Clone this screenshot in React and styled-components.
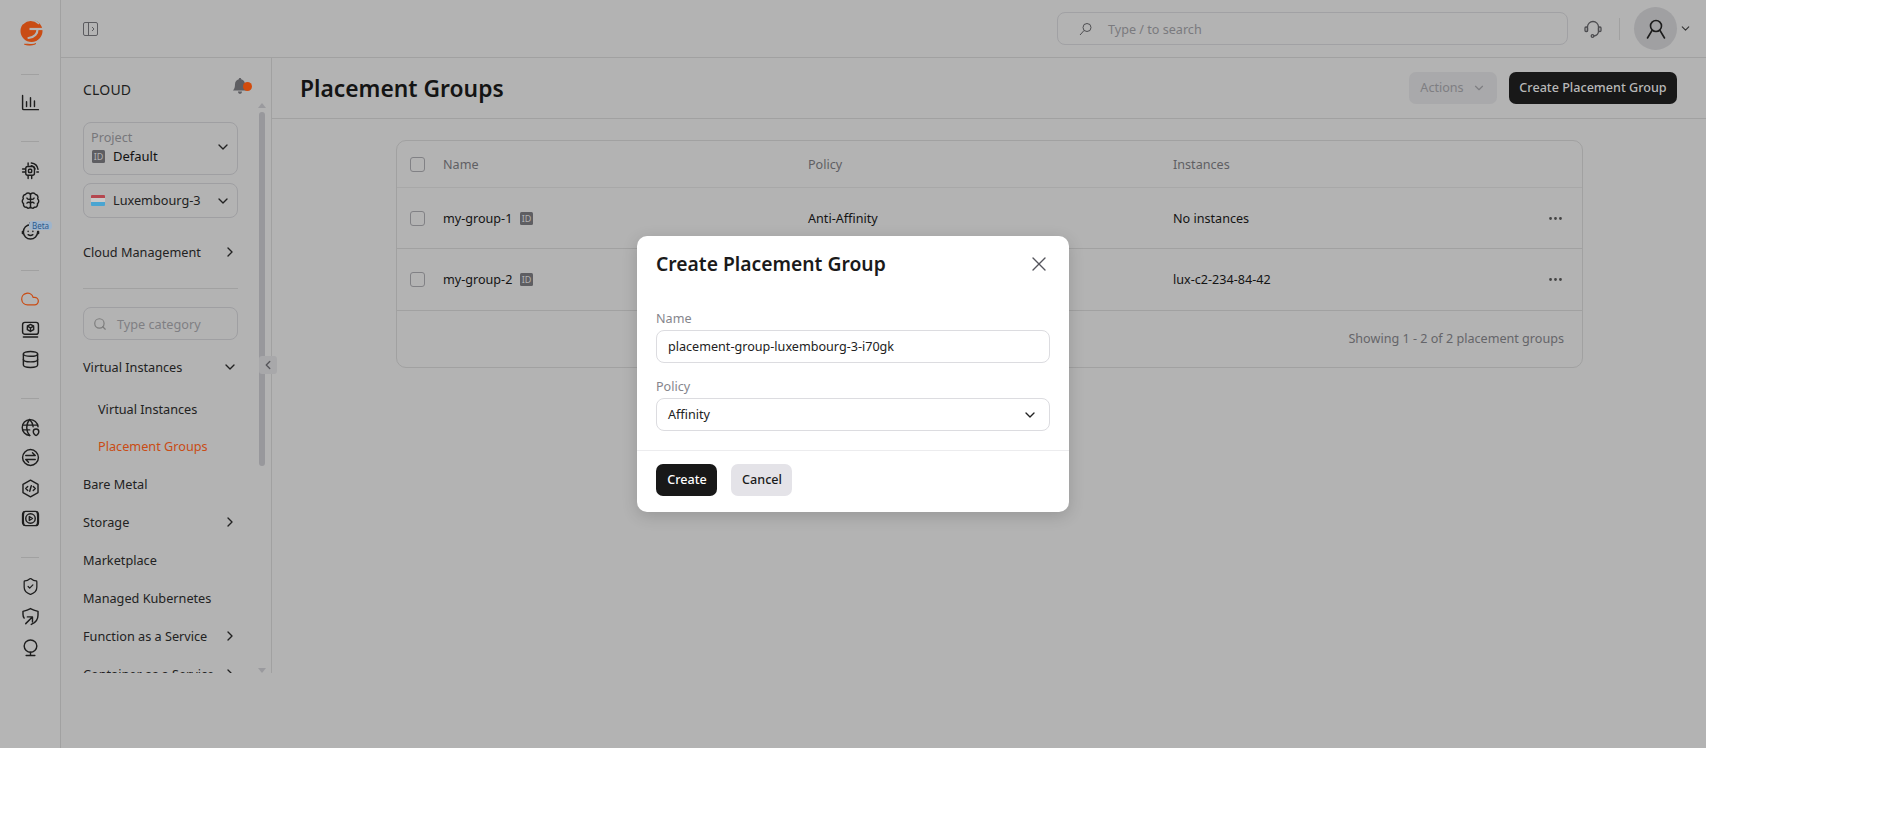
import React from "react"
import styled, { createGlobalStyle } from "styled-components"
import { ChevronDown, ChevronRight, ChevronLeft, Search, X, Ellipsis, Cloud, Database, ShieldCheck } from "lucide-react"

const GlobalStyle = createGlobalStyle`
  html, body {
    margin: 0;
    background: #fff;
  }
  body {
    font-family: "Noto Sans", "Open Sans", sans-serif;
    color: #1a1a1a;
  }
  * {
    box-sizing: border-box;
  }
`

const Logo = () => (
  <svg width="24" height="28" viewBox="0 0 24 28" fill="none">
    <circle cx="11.500" cy="13" r="11" fill="#c94c14" />
    <path d="M16 25.500c-3.500 2-8 2-11.500.8 4 .2 8-.2 11.500-.8Z" fill="#c94c14" stroke="#c94c14" />
    <path d="M3 5.500C7 1.500 14 1 18.500 5.500" stroke="#b5b5b5" strokeWidth="1.600" strokeLinecap="round" />
    <path d="M9.500 11H24" stroke="#b5b5b5" strokeWidth="2.200" />
    <path d="M17.500 11c.2 4.500-3 8.500-9 9" stroke="#b5b5b5" strokeWidth="2.200" strokeLinecap="round" />
    <path d="M20 21.500c-3 3-7 4.200-11 3.700" stroke="#b5b5b5" strokeWidth="1.200" strokeLinecap="round" />
  </svg>
)

const Stroke = ({ size = 19, children }) => (
  <svg width={size} height={size} viewBox="0 0 24 24" fill="none" stroke="currentColor" strokeWidth="1.800" strokeLinecap="round" strokeLinejoin="round">
    {children}
  </svg>
)

const ChartIcon = () => (
  <Stroke>
    <path d="M2 3v16.500c0 1 .5 1.500 1.500 1.500H22" />
    <path d="M7 11v6M12 6v11M17 10v7" />
  </Stroke>
)

const ChipIcon = () => (
  <Stroke>
    <rect x="6" y="7" width="11" height="11" rx="2.500" />
    <rect x="9.500" y="10.500" width="4" height="4" rx="1" />
    <path d="M2 10h3M2 14h3M9 19v3M13.500 19v3M9 2.500v3" />
    <path d="M13 2.500c4.500.4 7.800 3.700 8.500 8M13 6c2.200.3 4 2 4.700 4.200M20 14h2" />
  </Stroke>
)

const BrainIcon = () => (
  <Stroke>
    <path d="M12 4.500C11 2 7 1.700 5.700 4.500 3 4.800 1.800 7.500 3 9.800c-2 1.700-1.800 4.800.2 6.200-.7 2.700 1.500 5 4 4.500 1.300 1.800 3.700 1.500 4.800-.5 1.100 2 3.500 2.300 4.800.5 2.500.5 4.700-1.800 4-4.500 2-1.400 2.200-4.500.2-6.200 1.200-2.300 0-5-2.700-5.300C17 1.700 13 2 12 4.500Z" />
    <path d="M12 4.500v15.500" />
    <path d="M12 10c-1.500.8-3.500.5-4.500-1M12 15c-1.300-1-3.500-1-4.500.3M12 10c1.500.8 3.500.5 4.500-1M12 15c1.300-1 3.500-1 4.500.3" />
  </Stroke>
)

const BabyIcon = () => (
  <Stroke>
    <path d="M12 3.500a9 9 0 1 0 9 9" />
    <path d="M12 3.500c-1.500-1-1-3 1-2.500" />
    <path d="M9 11.500v.5M15 11.500v.5M9 16c1.800 1.400 4.200 1.400 6 0" />
    <path d="M3 12H1.800v2.500H3M21 12h1.200v2.500H21" />
  </Stroke>
)

const ScreenBoxIcon = () => (
  <Stroke>
    <rect x="2" y="3" width="20" height="15" rx="3" />
    <path d="M12 5.500l4 2.200v4.600l-4 2.200-4-2.200V7.700zM8 7.700l4 2.300 4-2.300M12 10v4.500M3 21.500h18" />
  </Stroke>
)

const GlobePinIcon = () => (
  <Stroke>
    <path d="M21.500 11A10 10 0 1 0 11 22" />
    <path d="M2 9h19M2 15h9M11 2c-5 5.500-5 14.500 0 20M11 2c2.800 3 4.200 6.500 4.300 9" />
    <path d="M22.500 17.500c0 2-2.500 4.500-3.500 4.500s-3.500-2.500-3.500-4.500a3.500 3.500 0 0 1 7 0Z" />
  </Stroke>
)

const SwapIcon = () => (
  <Stroke>
    <circle cx="12" cy="12" r="10" />
    <path d="M6 9.500h12M14.500 6l3.500 3.500M18 14.500H6M9.500 18L6 14.500" />
  </Stroke>
)

const CodeHexIcon = () => (
  <Stroke>
    <path d="M12 1.500l9.500 5.300v10.400L12 22.500l-9.500-5.300V6.800z" />
    <path d="M8.500 9.500L6 12l2.500 2.500M15.500 9.500L18 12l-2.500 2.500M13 8.500l-2 7" />
  </Stroke>
)

const VideoIcon = () => (
  <Stroke>
    <rect x="2" y="3" width="20" height="18" rx="4" />
    <path d="M4 3.500c-1.500 2-1.500 15 0 17M20 3.500c1.500 2 1.500 15 0 17" />
    <circle cx="12" cy="12" r="6" />
    <path d="M10.500 9.500v5l4-2.500z" />
  </Stroke>
)

const ShieldArrowIcon = () => (
  <Stroke>
    <path d="M4 14c-1-1.500-1.500-3-1.500-5V5.500C6 4.500 9 3.500 12 2c3 1.500 6 2.500 9.500 3.500V10c0 5.500-3.500 10-8.500 12" />
    <path d="M6 21l8-8M8 12.500h6.500V19" />
  </Stroke>
)

const BulbIcon = () => (
  <Stroke>
    <path d="M12 2.500c4.500 0 8 3.300 8 7.500 0 4.500-4 8-8 8s-8-3.500-8-8c0-4.200 3.500-7.500 8-7.500Z" />
    <path d="M12 18v4M6.500 22h11" />
  </Stroke>
)

const BellIcon = () => (
  <svg width="14" height="16" viewBox="0 0 14 16">
    <path d="M7 0c.8 0 1.200.5 1.200 1.200C10.500 1.800 12 3.800 12 6.200c0 3 .6 4.600 2 6.300H0c1.400-1.700 2-3.300 2-6.300 0-2.400 1.500-4.400 3.800-5C5.800.5 6.200 0 7 0ZM5 13.500h4c0 1.500-.9 2.300-2 2.300s-2-.8-2-2.300Z" fill="#5e5e62" />
  </svg>
)

const PanelIcon = () => (
  <svg width="15" height="14" viewBox="0 0 15 14" fill="none" stroke="#5c5c60" strokeWidth="1">
    <rect x="0.500" y="0.500" width="14" height="13" rx="1.500" />
    <path d="M5.500 1v12M9 5l2 2-2 2" />
  </svg>
)

const HeadsetIcon = () => (
  <svg width="20" height="20" viewBox="0 0 20 20" fill="none" stroke="#4d4d50" strokeWidth="1.300" strokeLinecap="round">
    <path d="M4.500 12V8a5.500 5.500 0 0 1 11 0v4c0 2.500-1.500 4.500-4.500 5" />
    <rect x="2" y="8" width="2.500" height="4.500" rx="1" />
    <rect x="15.500" y="8" width="2.500" height="4.500" rx="1" />
    <circle cx="9.500" cy="17" r="1.300" />
  </svg>
)

const UserIcon = () => (
  <svg width="20" height="20" viewBox="0 0 20 20" fill="none" stroke="#1c1c1c" strokeWidth="1.600" strokeLinecap="round">
    <circle cx="10" cy="7" r="5.500" />
    <path d="M6 11.500L1.500 19M14 11.500L18.500 19" />
  </svg>
)

const SearchGlassIcon = () => (
  <svg width="15" height="15" viewBox="0 0 15 15" fill="none" stroke="#4f4f52" strokeWidth="1">
    <circle cx="9" cy="5.500" r="4" />
    <path d="M6 8.500L2 13" />
  </svg>
)

const railGroups = [
  [<ChartIcon />],
  [<ChipIcon />, <BrainIcon />, <BabyIcon />],
  [<Cloud size={20} strokeWidth={1.5} color="#c94c14" />, <ScreenBoxIcon />, <Database size={19} strokeWidth={1.8} />],
  [<GlobePinIcon />, <SwapIcon />, <CodeHexIcon />, <VideoIcon />],
  [<ShieldCheck size={19} strokeWidth={1.6} />, <ShieldArrowIcon />, <BulbIcon />],
]

const rows = [
  { name: "my-group-1", policy: "Anti-Affinity", instances: "No instances" },
  { name: "my-group-2", policy: "Affinity", instances: "lux-c2-234-84-42" },
]

const Flag = () => (
  <FlagBox>
    <FlagStripe color="#b5474f" />
    <FlagStripe color="#c9c9c9" />
    <FlagStripe color="#4aa5d2" />
  </FlagBox>
)

const App = () => {
  return (
    <Frame>
      <GlobalStyle />
      <Rail>
        <LogoSlot>
          <Logo />
        </LogoSlot>
        {railGroups.map((group, i) => (
          <React.Fragment key={i}>
            <RailDivider />
            <RailGroup>
              {group.map((icon, j) => (
                <RailSlot key={j}>
                  {icon}
                  {i === 1 && j === 2 && <BetaBadge>Beta</BetaBadge>}
                </RailSlot>
              ))}
            </RailGroup>
          </React.Fragment>
        ))}
      </Rail>

      <Column>
        <TopBar>
          <PanelIcon />
          <TopRight>
            <GlobalSearch>
              <SearchGlassIcon />
              <span>Type / to search</span>
            </GlobalSearch>
            <HeadsetIcon />
            <TopDivider />
            <Avatar>
              <UserIcon />
            </Avatar>
            <ChevronDown size={13} color="#333" />
          </TopRight>
        </TopBar>

        <Content>
          <Sidebar>
            <SideBody>
              <SideHead>
                <SideTitle>CLOUD</SideTitle>
                <BellWrap>
                  <BellIcon />
                  <BellDot />
                </BellWrap>
              </SideHead>

              <ProjectBox>
                <div>
                  <ProjectLabel>Project</ProjectLabel>
                  <ProjectValue>
                    <IdBadge>ID</IdBadge>
                    Default
                  </ProjectValue>
                </div>
                <ChevronDown size={16} color="#222" />
              </ProjectBox>

              <RegionBox>
                <RegionName>
                  <Flag />
                  Luxembourg-3
                </RegionName>
                <ChevronDown size={16} color="#222" />
              </RegionBox>

              <NavRow>
                Cloud Management
                <ChevronRight size={16} />
              </NavRow>

              <SideDivider />

              <CategorySearch>
                <Search size={14} color="#7c7c7c" />
                Type category
              </CategorySearch>

              <NavRow>
                Virtual Instances
                <ChevronDown size={16} />
              </NavRow>
              <SubGroup>
                <SubRow>Virtual Instances</SubRow>
                <SubRow $active>Placement Groups</SubRow>
              </SubGroup>
              <NavRow>Bare Metal</NavRow>
              <NavRow>
                Storage
                <ChevronRight size={16} />
              </NavRow>
              <NavRow>Marketplace</NavRow>
              <NavRow>Managed Kubernetes</NavRow>
              <NavRow>
                Function as a Service
                <ChevronRight size={16} />
              </NavRow>
              <NavRow>
                Container as a Service
                <ChevronRight size={16} />
              </NavRow>
            </SideBody>

            <ScrollTrack>
              <ScrollArrow />
              <ScrollThumb />
              <ScrollArrow $down />
            </ScrollTrack>

            <CollapseHandle>
              <ChevronLeft size={14} strokeWidth={2.4} color="#55555a" />
            </CollapseHandle>
          </Sidebar>

          <Main>
            <PageHeader>
              <PageTitle>Placement Groups</PageTitle>
              <HeaderActions>
                <ActionsButton>
                  Actions
                  <ChevronDown size={14} />
                </ActionsButton>
                <DarkButton>Create Placement Group</DarkButton>
              </HeaderActions>
            </PageHeader>

            <TableWrap>
              <TableCard>
                <HeadRow>
                  <Checkbox />
                  <span>Name</span>
                  <span>Policy</span>
                  <span>Instances</span>
                </HeadRow>
                {rows.map((row) => (
                  <BodyRow key={row.name}>
                    <Checkbox />
                    <NameCell>
                      <RowName>{row.name}</RowName>
                      <IdBadge>ID</IdBadge>
                    </NameCell>
                    <span>{row.policy}</span>
                    <InstanceCell>
                      {row.instances}
                      <Ellipsis size={17} color="#444" />
                    </InstanceCell>
                  </BodyRow>
                ))}
                <TableFooter>Showing 1 - 2 of 2 placement groups</TableFooter>
              </TableCard>
            </TableWrap>
          </Main>
        </Content>
      </Column>

      <Dialog>
        <DialogHead>
          <DialogTitle>Create Placement Group</DialogTitle>
          <X size={24} strokeWidth={1.4} color="#55555c" />
        </DialogHead>
        <DialogBody>
          <FieldLabel>Name</FieldLabel>
          <FieldBox>placement-group-luxembourg-3-i70gk</FieldBox>
          <FieldLabel>Policy</FieldLabel>
          <FieldBox>
            Affinity
            <ChevronDown size={16} color="#222" />
          </FieldBox>
        </DialogBody>
        <DialogFoot>
          <DialogButton $primary>Create</DialogButton>
          <DialogButton>Cancel</DialogButton>
        </DialogFoot>
      </Dialog>
    </Frame>
  )
}

export default App

const Frame = styled.div`
  position: relative;
  display: flex;
  width: 1706px;
  height: 748px;
  background: #b3b3b3;
  overflow: hidden;
`

const Rail = styled.aside`
  width: 61px;
  flex-shrink: 0;
  border-right: 1px solid #a1a1a1;
  background: #b5b5b5;
  display: flex;
  flex-direction: column;
  align-items: center;
  padding-top: 17px;
  color: #1e1e1e;
`

const LogoSlot = styled.div`
  height: 30px;
  display: flex;
  align-items: center;
  justify-content: center;
  margin: 0 0 3px 3px;
`

const RailDivider = styled.div`
  width: 18px;
  height: 1px;
  background: #a1a1a1;
  margin: 23.500px 0 13px;
`

const RailGroup = styled.div`
  display: flex;
  flex-direction: column;
  gap: 0.500px;
`

const RailSlot = styled.div`
  position: relative;
  width: 30px;
  height: 30px;
  display: flex;
  align-items: center;
  justify-content: center;
`

const BetaBadge = styled.span`
  position: absolute;
  top: 5px;
  left: 14px;
  padding: 0 3px;
  height: 9px;
  line-height: 9px;
  font-size: 8px;
  border-radius: 4px;
  background: #9fb5cc;
  color: #2b5a8e;
`

const Column = styled.div`
  flex: 1;
  min-width: 0;
  display: flex;
  flex-direction: column;
`

const TopBar = styled.header`
  height: 58px;
  flex-shrink: 0;
  border-bottom: 1px solid #a1a1a1;
  display: flex;
  align-items: center;
  justify-content: space-between;
  padding: 0 14px 0 22px;
`

const TopRight = styled.div`
  display: flex;
  align-items: center;
`

const GlobalSearch = styled.div`
  width: 511px;
  height: 33px;
  border: 1px solid #a1a1a4;
  border-radius: 8px;
  display: flex;
  align-items: center;
  gap: 15px;
  padding: 1px 0 0 20px;
  margin-right: 15px;
  font-size: 12.600px;
  color: #7a7a7e;
`

const TopDivider = styled.div`
  width: 1px;
  height: 22px;
  background: #a1a1a1;
  margin: 0 14px 0 16px;
`

const Avatar = styled.div`
  width: 43px;
  height: 43px;
  border-radius: 50%;
  background: #a0a0a2;
  display: flex;
  align-items: center;
  justify-content: center;
  margin-right: 2px;
`

const Content = styled.div`
  flex: 1;
  display: flex;
  min-height: 0;
`

const Sidebar = styled.nav`
  position: relative;
  width: 211px;
  height: 615px;
  flex-shrink: 0;
  border-right: 1px solid #a1a1a1;
  display: flex;
`

const SideBody = styled.div`
  width: 194px;
  padding: 11px 0 0 22px;
  overflow: hidden;
  flex-shrink: 0;
`

const SideHead = styled.div`
  height: 40px;
  width: 164px;
  display: flex;
  align-items: center;
  justify-content: space-between;
  margin-bottom: 13px;
`

const SideTitle = styled.span`
  font-size: 14px;
  letter-spacing: 0.200px;
  color: #1e1e1e;
`

const BellWrap = styled.div`
  position: relative;
  display: flex;
  margin-top: -6px;
`

const BellDot = styled.span`
  position: absolute;
  right: -5px;
  top: 4px;
  width: 9px;
  height: 9px;
  border-radius: 50%;
  background: #d24b0c;
`

const ProjectBox = styled.div`
  width: 155px;
  height: 53px;
  border: 1px solid #9f9fa2;
  border-radius: 8px;
  display: flex;
  align-items: center;
  justify-content: space-between;
  padding: 0 6px 3px 7px;
  margin-bottom: 8px;
`

const ProjectLabel = styled.div`
  font-size: 12.700px;
  line-height: 18px;
  margin-bottom: 1px;
  color: #77777b;
`

const ProjectValue = styled.div`
  display: flex;
  align-items: center;
  gap: 8px;
  margin-left: 1px;
  font-size: 13px;
  line-height: 19px;
  color: #111;
`

const IdBadge = styled.span`
  width: 13px;
  height: 13px;
  border-radius: 1.500px;
  background: #5e5e62;
  color: #b3b3b3;
  font-size: 9px;
  line-height: 13px;
  text-align: center;
  flex-shrink: 0;
`

const RegionBox = styled.div`
  width: 155px;
  height: 35px;
  border: 1px solid #9f9fa2;
  border-radius: 8px;
  display: flex;
  align-items: center;
  justify-content: space-between;
  padding: 0 6px 0 7px;
  margin-bottom: 15px;
`

const RegionName = styled.div`
  display: flex;
  align-items: center;
  gap: 8px;
  padding-bottom: 1px;
  font-size: 12.700px;
  color: #222;
`

const FlagBox = styled.span`
  width: 14px;
  height: 11px;
  display: flex;
  flex-direction: column;
  border-radius: 1px;
  overflow: hidden;
`

const FlagStripe = styled.span`
  flex: 1;
  background: ${(p) => p.color};
`

const NavRow = styled.div`
  width: 157px;
  height: 38px;
  flex-shrink: 0;
  display: flex;
  align-items: center;
  justify-content: space-between;
  padding-right: 2px;
  font-size: 12.700px;
  color: #222;
  white-space: nowrap;
`

const SideDivider = styled.div`
  width: 155px;
  height: 1px;
  background: #a1a1a1;
  margin: 17px 0 18px;
`

const CategorySearch = styled.div`
  width: 155px;
  height: 33px;
  border: 1px solid #9f9fa2;
  border-radius: 8px;
  display: flex;
  align-items: center;
  gap: 10px;
  padding-left: 9px;
  margin-bottom: 8px;
  font-size: 12.700px;
  color: #7f7f83;
`

const SubGroup = styled.div`
  padding: 4px 0 1px 15px;
`

const SubRow = styled.div`
  height: 37px;
  display: flex;
  align-items: center;
  font-size: 12.700px;
  color: ${(p) => (p.$active ? "#c94c14" : "#222")};
`

const ScrollTrack = styled.div`
  width: 14px;
  padding: 45px 0 0;
  display: flex;
  flex-direction: column;
  align-items: center;
  gap: 4px;
`

const ScrollArrow = styled.span`
  width: 0;
  height: 0;
  border-left: 4px solid transparent;
  border-right: 4px solid transparent;
  ${(p) =>
    p.$down
      ? "border-top: 5px solid #9a9a9e; margin-top: 198px;"
      : "border-bottom: 5px solid #9a9a9e;"}
`

const ScrollThumb = styled.span`
  width: 6px;
  height: 354px;
  border-radius: 3px;
  background: #98989c;
`

const CollapseHandle = styled.div`
  position: absolute;
  left: 198px;
  top: 298px;
  width: 18px;
  height: 18px;
  border-radius: 3px;
  background: #a8a8aa;
  display: flex;
  align-items: center;
  justify-content: center;
`

const Main = styled.main`
  flex: 1;
  min-width: 0;
`

const PageHeader = styled.div`
  height: 61px;
  border-bottom: 1px solid #a1a1a1;
  display: flex;
  align-items: center;
  justify-content: space-between;
  padding: 0 29px 0 28px;
`

const PageTitle = styled.h1`
  margin: 0;
  font-size: 22.800px;
  font-weight: 600;
  color: #141414;
`

const HeaderActions = styled.div`
  display: flex;
  gap: 12px;
`

const ActionsButton = styled.div`
  width: 88px;
  height: 32px;
  border-radius: 7px;
  background: #a9a9ab;
  color: #7e7e82;
  font-size: 12.600px;
  padding-bottom: 1px;
  display: flex;
  align-items: center;
  justify-content: center;
  gap: 8px;
`

const DarkButton = styled.div`
  width: 168px;
  height: 32px;
  padding-bottom: 1px;
  border-radius: 7px;
  background: #181818;
  color: #b9b9b9;
  font-size: 12.600px;
  font-weight: 500;
  display: flex;
  align-items: center;
  justify-content: center;
`

const TableWrap = styled.div`
  padding: 21px 123px 0 124px;
`

const TableCard = styled.div`
  border: 1px solid #a1a1a1;
  border-radius: 10px;
`

const gridRow = `
  display: grid;
  grid-template-columns: 46px 365px 365px 1fr;
  align-items: center;
  font-size: 12.600px;
`

const HeadRow = styled.div`
  ${gridRow}
  height: 47px;
  border-bottom: 1px solid #a8a8a8;
  color: #5f5f63;
`

const BodyRow = styled.div`
  ${gridRow}
  height: 61px;
  border-bottom: 1px solid #a1a1a1;
  color: #141414;
  & + & {
    height: 62px;
  }
`

const Checkbox = styled.span`
  width: 15px;
  height: 15px;
  margin-left: 13px;
  border: 1px solid #818185;
  border-radius: 3px;
`

const NameCell = styled.div`
  display: flex;
  align-items: center;
  gap: 7px;
`

const RowName = styled.span`
  width: 70px;
`

const InstanceCell = styled.div`
  display: flex;
  align-items: center;
  justify-content: space-between;
  padding-right: 18px;
`

const TableFooter = styled.div`
  height: 56px;
  display: flex;
  align-items: center;
  justify-content: flex-end;
  padding: 0 18px 2px 0;
  font-size: 12.600px;
  color: #656569;
`

const Dialog = styled.div`
  position: absolute;
  left: 637px;
  top: 236px;
  width: 432px;
  height: 276px;
  border-radius: 10px;
  background: #fff;
  box-shadow: 0 4px 16px rgba(0, 0, 0, 0.16);
  display: flex;
  flex-direction: column;
`

const DialogHead = styled.div`
  height: 56px;
  padding: 0 18px 0 19px;
  display: flex;
  align-items: center;
  justify-content: space-between;
`

const DialogTitle = styled.h2`
  margin: 0 0 2px;
  font-size: 19.300px;
  font-weight: 600;
  color: #1a1a1a;
`

const DialogBody = styled.div`
  padding: 18px 19px 0;
  flex: 1;
`

const FieldLabel = styled.div`
  font-size: 12.600px;
  line-height: 18px;
  color: #85858c;
  margin-bottom: 2px;
`

const FieldBox = styled.div`
  height: 33px;
  border: 1px solid #dcdce0;
  border-radius: 8px;
  padding: 0 11px;
  margin-bottom: 15px;
  display: flex;
  align-items: center;
  justify-content: space-between;
  font-size: 12.600px;
  color: #222;
`

const DialogFoot = styled.div`
  height: 62px;
  border-top: 1px solid #ececee;
  padding: 13px 19px 0;
  display: flex;
  gap: 14px;
`

const DialogButton = styled.div`
  width: 61px;
  height: 32px;
  border-radius: 7px;
  padding: 0 0 1px 1px;
  display: flex;
  align-items: center;
  justify-content: center;
  font-size: 12.600px;
  font-weight: 500;
  background: ${(p) => (p.$primary ? "#181818" : "#e4e3e8")};
  color: ${(p) => (p.$primary ? "#fff" : "#1a1a1a")};
`
